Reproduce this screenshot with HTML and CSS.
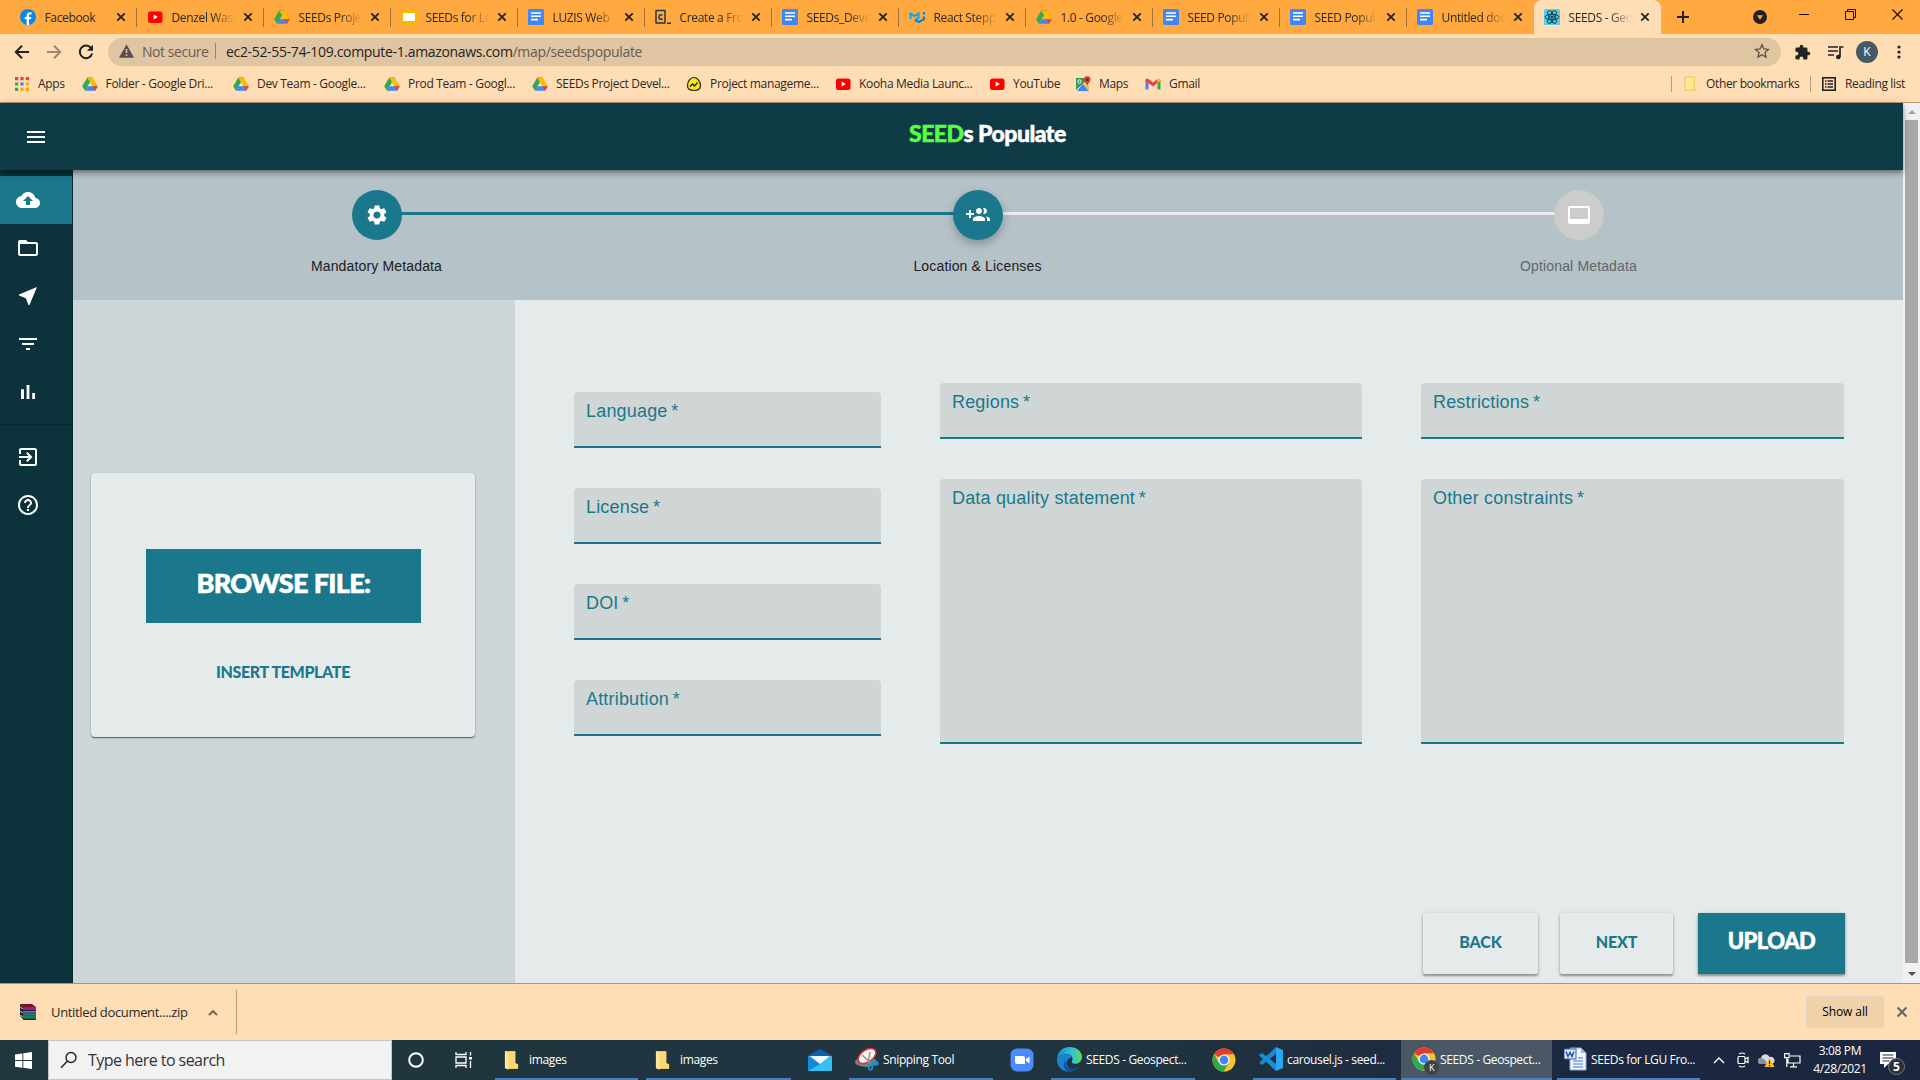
FILE: index.html
```html
<!DOCTYPE html>
<html lang="en">
<head>
<meta charset="utf-8">
<title>SEEDS - Geospatial</title>
<link rel="stylesheet" href="styles.css">
</head>
<body>
<svg class="defs" aria-hidden="true">
  <symbol id="x" viewBox="0 0 10 10"><path d="M1.3 1.3l7.4 7.4M8.700 1.300l-7.400 7.400" stroke="currentColor" stroke-width="1.800" fill="none"/></symbol>
  <symbol id="drive" viewBox="0 0 16 16"><path d="M5.300 1.500h5.400L8 6.200z" fill="#188038"/><path d="M5.300 1.500L.2 10.300l2.700 4.500L8 6.200z" fill="#34a853"/><path d="M10.700 1.500L15.800 10.300h-5.400L5.300 1.500z" fill="#fbbc04"/><path d="M5.500 10.300h10.300l-2.700 4.500H2.900z" fill="#4285f4"/><path d="M10.400 10.300h5.400l-2.700 4.500z" fill="#ea4335"/></symbol>
  <symbol id="docs" viewBox="0 0 16 16"><rect width="16" height="16" rx="1.500" fill="#4285f4"/><path d="M3 4h10M3 7.300h10M3 10.600h7" stroke="#fff" stroke-width="1.600"/></symbol>
  <symbol id="yt" viewBox="0 0 16 16"><rect x="1" y="2.500" width="14.500" height="11.500" rx="2.500" fill="#f00"/><path d="M6.700 5.600v5l4.200-2.500z" fill="#fff"/></symbol>
  <symbol id="folder" viewBox="0 0 16 22"><path d="M1 2h11v13l3 1v5H3l-2-1z" fill="#f2c75c"/><path d="M1 2l4 2v18l-4-2z" fill="#ffe69a"/><path d="M5 3h7v12l3 1v4H5z" fill="#fbd873"/></symbol>
  <symbol id="chrome" viewBox="0 0 24 24"><circle cx="12" cy="12" r="11.500" fill="#fbc02d"/><path d="M12 12L2 6.300A11.500 11.500 0 0 1 22 6.300H12z" fill="#e33b2e"/><path d="M2 6.300A11.500 11.500 0 0 0 11.500 23.500L17 14.800 12 12 7 14.800z" fill="#2da94f"/><circle cx="12" cy="12" r="5.600" fill="#fff"/><circle cx="12" cy="12" r="4.400" fill="#4285f4"/></symbol>
</svg>

<header class="tabs">
  <div class="tab"><svg class="fav" viewBox="0 0 16 16"><circle cx="8" cy="8" r="8" fill="#0b86f5"/><path d="M9 16v-5.700h2l.4-2.300H9V6.600c0-.8.4-1.200 1.300-1.200h1.200V3.300C9 2.800 6.700 3.300 6.700 6.200V8h-2v2.300h2V16z" fill="#fff"/></svg><span class="tab-name">Facebook</span><svg class="close"><use href="#x"/></svg></div>
  <div class="tab"><svg class="fav"><use href="#yt"/></svg><span class="tab-name">Denzel Wash</span><svg class="close"><use href="#x"/></svg></div>
  <div class="tab"><svg class="fav"><use href="#drive"/></svg><span class="tab-name">SEEDs Projec</span><svg class="close"><use href="#x"/></svg></div>
  <div class="tab"><svg class="fav" viewBox="0 0 16 16"><rect width="16" height="16" rx="1" fill="#f6b704"/><path d="M2 4h12v8H2z" fill="#fff"/></svg><span class="tab-name">SEEDs for LG</span><svg class="close"><use href="#x"/></svg></div>
  <div class="tab"><svg class="fav"><use href="#docs"/></svg><span class="tab-name">LUZIS Web -</span><svg class="close"><use href="#x"/></svg></div>
  <div class="tab"><svg class="fav" viewBox="0 0 16 16" fill="none" stroke="#263645" stroke-width="1.500"><rect x="1" y="1.500" width="9" height="12.500" rx=".5"/><path d="M7.500 6.300Q4 4.800 4 8t3.500 1.700M12 14.200h4"/></svg><span class="tab-name">Create a Fro</span><svg class="close"><use href="#x"/></svg></div>
  <div class="tab"><svg class="fav"><use href="#docs"/></svg><span class="tab-name">SEEDs_Deve</span><svg class="close"><use href="#x"/></svg></div>
  <div class="tab"><svg class="fav" viewBox="0 0 16 16" fill="none" stroke-width="2"><path d="M1.500 10V4.500L5.500 7l4-2.500V9L6 11" stroke="#00a5f5"/><path d="M6 11l4 2 5-3V7.500M15 3v2.500" stroke="#0082c8"/></svg><span class="tab-name">React Stepp</span><svg class="close"><use href="#x"/></svg></div>
  <div class="tab"><svg class="fav"><use href="#drive"/></svg><span class="tab-name">1.0 - Google</span><svg class="close"><use href="#x"/></svg></div>
  <div class="tab"><svg class="fav"><use href="#docs"/></svg><span class="tab-name">SEED Popula</span><svg class="close"><use href="#x"/></svg></div>
  <div class="tab"><svg class="fav"><use href="#docs"/></svg><span class="tab-name">SEED Popula</span><svg class="close"><use href="#x"/></svg></div>
  <div class="tab last"><svg class="fav"><use href="#docs"/></svg><span class="tab-name">Untitled doc</span><svg class="close"><use href="#x"/></svg></div>
  <div class="tab active"><svg class="fav" viewBox="0 0 16 16"><rect width="16" height="16" rx="1.500" fill="#53cdec"/><g fill="none" stroke="#174150" stroke-width="1"><ellipse cx="8" cy="8" rx="7" ry="2.700"/><ellipse cx="8" cy="8" rx="7" ry="2.700" transform="rotate(60 8 8)"/><ellipse cx="8" cy="8" rx="7" ry="2.700" transform="rotate(120 8 8)"/></g><circle cx="8" cy="8" r="1.500" fill="#174150"/></svg><span class="tab-name">SEEDS - Geo</span><svg class="close"><use href="#x"/></svg></div>
  <svg class="plus" viewBox="0 0 14 14"><path d="M7 1v12M1 7h12" stroke="#222" stroke-width="2"/></svg>
  <div class="win">
    <svg class="menu" width="14" height="14" viewBox="0 0 14 14"><circle cx="7" cy="7" r="7" fill="#222"/><path d="M4 5.200h6L7 9.800z" fill="#ffa940"/></svg>
    <svg width="10" height="10" viewBox="0 0 10 10" class="up"><path d="M0 5.500h10" stroke="#111"/></svg>
    <svg width="11" height="11" viewBox="0 0 11 11" class="up" fill="none" stroke="#111"><path d="M.5 2.500h8v8h-8zM2.500 2.500v-2h8v8h-2"/></svg>
    <svg width="11" height="11" viewBox="0 0 11 11" class="up"><path d="M.5.500l10 10M10.500.500l-10 10" stroke="#111" stroke-width="1.100"/></svg>
  </div>
</header>

<div class="toolbar">
  <svg class="nav" viewBox="0 0 16 16"><path d="M15 8H2M8 1.800L1.800 8 8 14.200" fill="none" stroke="#222" stroke-width="2"/></svg>
  <svg class="nav" viewBox="0 0 16 16"><path d="M1 8h13M8 1.800L14.200 8 8 14.200" fill="none" stroke="#9c8a73" stroke-width="2"/></svg>
  <svg class="nav" viewBox="0 0 16 16"><path d="M13.300 4.200A6.300 6.300 0 1 0 14.200 9.500" fill="none" stroke="#222" stroke-width="2"/><path d="M15 .8v6H9z" fill="#222"/></svg>
  <div class="omni">
    <svg width="15" height="14" viewBox="0 0 15 14"><path d="M7.500.300L15 13.700H0z" fill="#52504d"/><path d="M7.500 5v4M7.500 10.300v1.700" stroke="#dfc5a1" stroke-width="1.500"/></svg>
    <span class="insecure">Not secure</span><i class="bar"></i>
    <span class="url"><b>ec2-52-55-74-109.compute-1.amazonaws.com</b>/map/seedspopulate</span>
    <svg class="star" viewBox="0 0 16 16"><path d="M8 1.700l1.900 4.300 4.600.4-3.500 3.100 1 4.600L8 11.700l-4 2.400 1-4.600L1.500 6.400 6.100 6z" fill="none" stroke="#5a5148" stroke-width="1.300"/></svg>
  </div>
  <div class="tools">
    <svg width="17" height="17" viewBox="0 0 24 24"><path fill="#222" d="M20.500 11H19V7c0-1.100-.9-2-2-2h-4V3.500a2.500 2.500 0 0 0-5 0V5H4c-1.100 0-2 .9-2 2v3.800h1.500a2.700 2.700 0 0 1 0 5.400H2V20c0 1.100.9 2 2 2h3.800v-1.500a2.700 2.700 0 0 1 5.400 0V22H17c1.100 0 2-.9 2-2v-4h1.500a2.500 2.500 0 0 0 0-5z"/></svg>
    <svg width="17" height="15" viewBox="0 0 17 15"><path d="M1 2h10M1 6h10M1 10h6" stroke="#222" stroke-width="1.700"/><path d="M13 12V2h3.500" stroke="#222" stroke-width="1.700" fill="none"/><circle cx="11.300" cy="12" r="2.300" fill="#222"/></svg>
    <span class="avatar">K</span>
    <svg class="dots" width="4" height="14" viewBox="0 0 4 14" fill="#222"><circle cx="2" cy="2" r="1.600"/><circle cx="2" cy="7" r="1.600"/><circle cx="2" cy="12" r="1.600"/></svg>
  </div>
</div>

<nav class="bookmarks">
  <a><svg viewBox="0 0 16 16"><path d="M1 1h3.200v3.200H1zM6.400 1h3.200v3.200H6.400zM11.800 1H15v3.200h-3.200z" fill="#ea4335"/><path d="M1 6.400h3.200v3.200H1zM1 11.800h3.200V15H1z" fill="#34a853"/><path d="M6.400 6.400h3.200v3.200H6.400z" fill="#4285f4"/><path d="M11.800 6.400H15v3.200h-3.200zM6.400 11.800h3.200V15H6.400zM11.800 11.800H15V15h-3.200z" fill="#fbaa05"/></svg>Apps</a>
  <a><svg><use href="#drive"/></svg>Folder - Google Dri...</a>
  <a><svg><use href="#drive"/></svg>Dev Team - Google...</a>
  <a><svg><use href="#drive"/></svg>Prod Team - Googl...</a>
  <a><svg><use href="#drive"/></svg>SEEDs Project Devel...</a>
  <a><svg viewBox="0 0 16 16"><path d="M8 1.500C4 1.500 1.500 6 1.500 9.500c0 3 2.500 5 6.500 5s6.500-2 6.500-5S12 1.500 8 1.500z" fill="#ffe81a" stroke="#222" stroke-width="1.200"/><path d="M4 10.500L6.500 8l2 2L11.500 6.500" fill="none" stroke="#222" stroke-width="1.400"/></svg>Project manageme...</a>
  <a><svg><use href="#yt"/></svg>Kooha Media Launc...</a>
  <a><svg><use href="#yt"/></svg>YouTube</a>
  <a><svg viewBox="0 0 16 16"><path d="M1 2h13v13H1z" fill="#dfe3e6"/><path d="M1 2h9v4L1 14z" fill="#2f9e56"/><path d="M8 8l6 7H2z" fill="#4285f4"/><path d="M8 8l6 7V9z" fill="#fbc02d"/><path d="M12.200 9.500C11 7 9 5.800 9 3.500a3.200 3.200 0 0 1 6.500 0c0 2.300-2 3.500-3.300 6z" fill="#e0392b"/><circle cx="12.200" cy="3.700" r="1.200" fill="#7c1a13"/><circle cx="4.500" cy="5.500" r="1.700" fill="none" stroke="#fff"/></svg>Maps</a>
  <a><svg viewBox="0 0 16 16"><path d="M.5 4v9.500h3V6z" fill="#4285f4"/><path d="M15.500 4v9.500h-3V6z" fill="#34a853"/><path d="M.5 4.500Q.8 1.500 3.500 3L8 6.500 12.500 3v4L8 10.500 .5 5z" fill="#ea4335"/><path d="M12.500 3q2.700-1.500 3 1.500V5l-3 2z" fill="#fbbc04"/></svg>Gmail</a>
  <div class="bm-right"><i class="bar"></i><svg class="bf" viewBox="0 0 12 16"><path d="M.6 1h10v10.500l1 1V15H.6z" fill="#ffe893" stroke="#e8c746"/></svg>Other bookmarks<i class="bar b2"></i><svg class="rl" viewBox="0 0 14 14"><rect x=".8" y=".8" width="12.400" height="12.400" fill="none" stroke="#222" stroke-width="1.600"/><path d="M3 4h1.500M5.500 4H11M3 7h1.500M5.500 7H11M3 10h1.500M5.500 10H11" stroke="#222" stroke-width="1.400"/></svg>Reading list</div>
</nav>

<div class="view">
  <div class="app">
    <header class="appbar">
      <svg class="mi" viewBox="0 0 24 24"><path d="M3 18h18v-2H3v2zm0-5h18v-2H3v2zm0-7v2h18V6H3z"/></svg>
      <h1><span>SEED</span>s Populate</h1>
    </header>
    <div class="body">
      <aside class="side">
        <a class="on"><svg class="mi" viewBox="0 0 24 24"><path d="M19.350 10.040C18.670 6.590 15.640 4 12 4 9.110 4 6.600 5.640 5.350 8.040 2.340 8.360 0 10.910 0 14c0 3.310 2.690 6 6 6h13c2.760 0 5-2.240 5-5 0-2.640-2.050-4.780-4.650-4.960zM14 13v4h-4v-4H7l5-5 5 5h-3z"/></svg></a>
        <a><svg class="mi" viewBox="0 0 24 24"><path d="M20 6h-8l-2-2H4c-1.100 0-1.990.9-1.990 2L2 18c0 1.100.9 2 2 2h16c1.100 0 2-.9 2-2V8c0-1.100-.9-2-2-2zm0 12H4V8h16v10z"/></svg></a>
        <a><svg class="mi" viewBox="0 0 24 24"><path d="M21 3L3 10.530v.98l6.840 2.650L12.480 21h.98L21 3z"/></svg></a>
        <a><svg class="mi" viewBox="0 0 24 24"><path d="M10 18h4v-2h-4v2zM3 6v2h18V6H3zm3 7h12v-2H6v2z"/></svg></a>
        <a><svg class="mi" viewBox="0 0 24 24"><path d="M5 9.200h3V19H5zM10.600 5h2.800v14h-2.800zm5.600 8H19v6h-2.800z"/></svg></a>
        <hr>
        <a><svg class="mi" viewBox="0 0 24 24"><path d="M10.090 15.590L11.500 17l5-5-5-5-1.410 1.410L12.670 11H3v2h9.670l-2.580 2.590zM19 3H5c-1.110 0-2 .9-2 2v4h2V5h14v14H5v-4H3v4c0 1.100.89 2 2 2h14c1.100 0 2-.9 2-2V5c0-1.100-.9-2-2-2z"/></svg></a>
        <a><svg class="mi" viewBox="0 0 24 24"><path d="M11 18h2v-2h-2v2zm1-16C6.480 2 2 6.480 2 12s4.480 10 10 10 10-4.480 10-10S17.520 2 12 2zm0 18c-4.410 0-8-3.590-8-8s3.590-8 8-8 8 3.590 8 8-3.590 8-8 8zm0-14c-2.210 0-4 1.790-4 4h2c0-1.100.9-2 2-2s2 .9 2 2c0 2-3 1.750-3 5h2c0-2.250 3-2.500 3-5 0-2.210-1.790-4-4-4z"/></svg></a>
      </aside>
      <main class="main">
        <section class="steps">
          <i class="rail"></i>
          <div class="step"><span class="dot"><svg class="mi" viewBox="0 0 24 24"><path d="M19.140 12.940c.04-.3.060-.61.060-.94 0-.32-.02-.64-.07-.94l2.030-1.580c.18-.14.230-.41.120-.61l-1.920-3.320c-.12-.22-.37-.29-.59-.22l-2.390.96c-.5-.38-1.030-.7-1.620-.94l-.36-2.540c-.04-.24-.24-.41-.48-.41h-3.840c-.24 0-.43.17-.47.41l-.36 2.540c-.59.240-1.130.57-1.620.94l-2.390-.96c-.22-.08-.47 0-.59.22L2.740 8.870c-.12.210-.08.470.12.610l2.030 1.580c-.05.300-.09.630-.09.94s.02.640.070.94l-2.030 1.580c-.18.140-.23.410-.12.610l1.920 3.320c.12.220.37.290.59.220l2.390-.96c.5.380 1.030.7 1.620.94l.36 2.540c.05.240.24.410.48.410h3.840c.24 0 .44-.17.470-.41l.36-2.540c.59-.24 1.130-.56 1.620-.94l2.390.96c.22.080.47 0 .59-.22l1.920-3.320c.12-.22.070-.47-.12-.61l-2.010-1.580zM12 15.600c-1.980 0-3.600-1.620-3.600-3.600s1.620-3.600 3.600-3.600 3.600 1.620 3.600 3.600-1.620 3.600-3.600 3.600z"/></svg></span>Mandatory Metadata</div>
          <div class="step"><span class="dot lift"><svg class="mi" viewBox="0 0 24 24"><path d="M8 10H5V7H3v3H0v2h3v3h2v-3h3v-2zm10 1c1.660 0 2.990-1.340 2.990-3S19.660 5 18 5c-.32 0-.63.050-.91.140.57.810.9 1.790.9 2.860s-.34 2.040-.9 2.860c.28.090.59.140.91.140zm-5 0c1.660 0 2.990-1.340 2.990-3S14.660 5 13 5c-1.660 0-3 1.340-3 3s1.340 3 3 3zm6.620 2.160c.83.730 1.380 1.660 1.380 2.840v2h3v-2c0-1.540-2.370-2.490-4.380-2.840zM13 13c-2 0-6 1-6 3v2h12v-2c0-2-4-3-6-3z"/></svg></span>Location &amp; Licenses</div>
          <div class="step off"><span class="dot"><svg class="mi" viewBox="0 0 24 24"><path d="M21 3H3c-1.100 0-2 .9-2 2v14c0 1.100.9 2 2 2h18c1.100 0 1.990-.9 1.990-2L23 5c0-1.100-.9-2-2-2zm0 13H3V5h18v11z"/></svg></span>Optional Metadata</div>
        </section>
        <div class="work">
          <section class="panel"><div class="card"><button class="browse">BROWSE FILE:</button><button class="template">INSERT TEMPLATE</button></div></section>
          <form class="form">
            <div class="cols">
              <div class="col first"><label>Language&thinsp;*</label><label>License&thinsp;*</label><label>DOI&thinsp;*</label><label>Attribution&thinsp;*</label></div>
              <div class="col"><label>Regions&thinsp;*</label><label class="area">Data quality statement&thinsp;*</label></div>
              <div class="col"><label>Restrictions&thinsp;*</label><label class="area">Other constraints&thinsp;*</label></div>
            </div>
            <div class="actions"><button type="button" class="back">BACK</button><button type="button" class="next">NEXT</button><button type="button" class="upload">UPLOAD</button></div>
          </form>
        </div>
      </main>
    </div>
  </div>
  <div class="scroll"><svg viewBox="0 0 8 4"><path d="M0 4l4-4 4 4z" fill="#a3a3a3"/></svg><i></i><svg viewBox="0 0 8 4"><path d="M0 0h8L4 4z" fill="#505050"/></svg></div>
</div>

<footer class="downloads">
  <svg width="17" height="17" viewBox="0 0 17 17"><path d="M1 1h12l4 3H4z" fill="#7a1030"/><path d="M4 4h13v3H4z" fill="#b0157a"/><path d="M4 8.500h13v3H4z" fill="#1663b5"/><path d="M4 13h13v3H4z" fill="#14804a"/><path d="M1 1l3 3v12l-3-3z" fill="#222"/><path d="M1.500 4l2 2M1.500 8l2 2M1.500 12l2 2" stroke="#fff"/><path d="M4 7.700h13M4 12.200h13M4 16.400h13" stroke="#222" stroke-width="1.300"/></svg>
  <span class="zip">Untitled document....zip</span>
  <svg class="chev" viewBox="0 0 10 7"><path d="M1 6l4-4 4 4" fill="none" stroke="#6b6258" stroke-width="1.900"/></svg>
  <i class="bar"></i>
  <button class="showall">Show all</button>
  <svg class="dx"><use href="#x"/></svg>
</footer>

<footer class="taskbar">
  <div class="start"><svg width="17" height="17" viewBox="0 0 17 17" fill="#fff"><path d="M0 2.400l7.400-1v6.700H0zM8.300 1.200L17 0v8.100H8.300zM0 9h7.400v6.700l-7.400-1zM8.300 9H17v8l-8.700-1.200z"/></svg></div>
  <div class="search"><svg width="18" height="18" viewBox="0 0 18 18" fill="none" stroke="#222" stroke-width="1.400"><circle cx="11" cy="6.500" r="5"/><path d="M7.500 10L1 16.800"/></svg>Type here to search</div>
  <div class="sys w48"><svg width="18" height="18" viewBox="0 0 18 18"><circle cx="9" cy="9" r="6.800" fill="none" stroke="#fff" stroke-width="2"/></svg></div>
  <div class="sys w46"><svg width="17" height="16" viewBox="0 0 17 16" fill="none" stroke="#fff" stroke-width="1.300"><path d="M1 0v2.500h10V0M1 5h10v6H1zM1 16v-2.500h10V16M15.500 0v3.500M15.500 9v7"/><path d="M14 5h3v2.500h-3z" fill="#fff" stroke="none"/></svg></div>
  <div class="task t1"><svg class="fold"><use href="#folder"/></svg>images</div>
  <div class="task t2"><svg class="fold"><use href="#folder"/></svg>images</div>
  <div class="sys mail"><svg width="24" height="24" viewBox="0 0 24 24"><path d="M0 8l12-7 12 7z" fill="#0b62b3"/><path d="M0 8h24v15H0z" fill="#29aaea"/><path d="M0 23L24 8v15z" fill="#35c0f2"/><path d="M0 8l12 8-12 7z" fill="#1688d8"/><path d="M2 8h20l-10 8z" fill="#f3f7fa"/></svg></div>
  <div class="task t3"><svg width="24" height="24" viewBox="0 0 24 24"><ellipse cx="11" cy="15" rx="11" ry="5" fill="#777e84"/><ellipse cx="12" cy="9" rx="10" ry="6" transform="rotate(-35 12 9)" fill="#f5f5f5" stroke="#d83434" stroke-width="1.500"/><path d="M7 8l10 9M15 5l-2 11" stroke="#8d9499" stroke-width="1.500"/><g fill="none" stroke="#1c8fd0" stroke-width="1.700"><ellipse cx="20" cy="16" rx="3" ry="1.700" transform="rotate(20 20 16)"/><ellipse cx="15.500" cy="20" rx="1.800" ry="3"/></g></svg>Snipping Tool</div>
  <div class="sys zoom"><svg width="24" height="24" viewBox="0 0 24 24"><rect x=".5" y=".5" width="23" height="23" rx="6.500" fill="#4a8cff"/><path d="M5 8h8q2 0 2 2v6H7q-2 0-2-2zM16 11l3.500-2.500v7L16 13z" fill="#fff"/></svg></div>
  <div class="task t4"><svg width="25" height="25" viewBox="0 0 24 24"><defs><linearGradient id="edge"><stop stop-color="#1689d2"/><stop offset=".6" stop-color="#2fc3d5"/><stop offset="1" stop-color="#62d957"/></linearGradient></defs><path d="M0 12C0 5 5 0 12 0c7 0 12 4.500 12 9.500 0 4-3 6.500-6.500 6.500-3 0-4-1-3-2.500 1.500-4-1.500-6.500-5-6.500C5 7 1 9 0 12z" fill="url(#edge)"/><path d="M0 12c1-3 5-5 9.500-5 3 0 4.500 1.500 4.500 3-6 1-7 9.500 1.500 12.500C7 26 0 20 0 12z" fill="#1a83d1"/><path d="M9 12c-3 6 3 13 12.500 6.500C18 23 13.500 24.500 10 23.300 5 20 6 15 9 12z" fill="#0c4f9c"/></svg>SEEDS - Geospect...</div>
  <div class="sys chr"><svg width="24" height="24"><use href="#chrome"/></svg></div>
  <div class="task t5"><svg width="24" height="24" viewBox="0 0 24 24"><path d="M17 0l7 3v18l-7 3z" fill="#29a6f2"/><path d="M17 0v7L3 18l-3-2.300z" fill="#1687d0"/><path d="M17 24v-7L3 6 0 8.300z" fill="#168fdb"/></svg>carousel.js - seed...</div>
  <div class="task t6"><span class="badged"><svg width="24" height="24"><use href="#chrome"/></svg><b>K</b></span>SEEDS - Geospect...</div>
  <div class="task t7"><svg width="23" height="24" viewBox="0 0 23 24"><path d="M6 1h11l5 5v17H6z" fill="#f1f6fe" stroke="#8fb0de"/><path d="M17 1v5h5z" fill="#9bb9e6"/><path d="M9 14h10M9 17h10M9 20h10M14 11h5" stroke="#7aa0da" stroke-width="1.400"/><rect y="2" width="12" height="10" fill="#dfeaff" stroke="#355fa8"/><path d="M2 4.500l2 5 2-4 2 4 2-5" fill="none" stroke="#2350a0" stroke-width="1.500"/></svg>SEEDs for LGU Fro...</div>
  <div class="tray">
    <svg width="12" height="8" viewBox="0 0 12 8"><path d="M1 7l5-5 5 5" fill="none" stroke="#fff" stroke-width="1.400"/></svg>
    <svg class="meet" width="12" height="16" viewBox="0 0 12 16" fill="none" stroke="#fff" stroke-width="1.200"><rect x="1" y="4.500" width="7" height="7" rx="1"/><path d="M8 7l3-1.500v5L8 9M2 2q3-2 6 0M2 14q3 2 6 0"/></svg>
    <svg width="17" height="15" viewBox="0 0 17 15"><path d="M3 11a3 3 0 0 1 0-6 4.500 4.500 0 0 1 8.500-1A3.500 3.500 0 0 1 14 11z" fill="#d9dcdf"/><path d="M3 11a3 3 0 0 1 0-6q4 0 6 6z" fill="#8a9198"/><path d="M11.500 4.500L16.500 14h-10z" fill="#ffc31f"/><path d="M11.500 7.500v3.500M11.500 12v1.200" stroke="#222" stroke-width="1.200"/></svg>
    <svg width="17" height="15" viewBox="0 0 17 15" fill="none" stroke="#fff" stroke-width="1.200"><path d="M6 3h10v7H4V6M9.500 10v3.500M6 13.800h7M.6.700h4.500v4H.6zM2.800 5v9"/></svg>
    <div class="clock"><span>3:08 PM</span><span>4/28/2021</span></div>
    <span class="note"><svg width="16" height="17" viewBox="0 0 16 17"><path d="M0 0h16v12H8l-4 4v-4H0z" fill="#fff"/><path d="M2.500 3h11M2.500 6h11M2.500 9h7" stroke="#1c2940" stroke-width="1.200"/></svg><b>5</b></span>
  </div>
</footer>
</body>
</html>
```
FILE: styles.css
```css
* { box-sizing: border-box; }
body {
  margin: 0; width: 1920px; height: 1080px; overflow: hidden;
  display: flex; flex-direction: column;
  font-family: "Open Sans", "Noto Sans", sans-serif; font-size: 12px; color: #2b2824;
  white-space: nowrap;
}
svg { flex: none; display: block; }
button { border: 0; padding: 0; font: inherit; }
.defs { position: absolute; width: 0; height: 0; }
.bar { width: 1px; flex: none; background: #b59d80; }

/* tab strip */
.tabs { height: 34px; flex: none; display: flex; align-items: center; background: #ffa940; padding-left: 9.500px; }
.tab { width: 127px; height: 34px; flex: none; display: flex; align-items: center; padding-left: 10px; position: relative; letter-spacing: -.35px; }
.tab::after { content: ""; position: absolute; right: 0; top: 8px; width: 1px; height: 19px; background: #a3702f; }
.tab.last::after, .tab.active::after { display: none; }
.tab.active { background: #ffdeb6; border-radius: 8px 8px 0 0; }
.fav { width: 16px; height: 16px; margin-right: 9px; }
.tab-name { width: 63px; overflow: hidden; -webkit-mask-image: linear-gradient(90deg, #000 65%, transparent); mask-image: linear-gradient(90deg, #000 65%, transparent); }
.tab:first-child .tab-name { -webkit-mask-image: none; mask-image: none; }
.close { width: 10px; height: 10px; margin-left: 8px; color: #222; }
.plus { width: 14px; height: 14px; margin-left: 15px; }
.win { margin-left: auto; display: flex; align-items: center; gap: 36px; padding-right: 17px; }
.win .menu { margin-right: -4px; }
.win .up { position: relative; top: -3px; }

/* address row */
.toolbar { height: 32px; flex: none; display: flex; align-items: center; background: #ffdeb6; padding: 4px 13px 0 14px; }
.nav { width: 16px; height: 16px; margin-right: 16px; }
.omni { width: 1673px; height: 28px; margin-left: -2px; border-radius: 14px; background: #dfc5a1; display: flex; align-items: center; padding: 0 11px 2px; font-size: 14px; }
.insecure { width: 73px; margin-left: 8px; color: #6a6055; letter-spacing: -.45px; }
.omni .bar { height: 16px; margin-right: 10px; background: #9b866b; }
.url { color: #665c50; letter-spacing: -.33px; }
.url b { font-weight: 400; color: #26231f; }
.star { width: 16px; height: 16px; margin-left: auto; }
.tools { flex: 1; display: flex; justify-content: space-between; align-items: center; padding-left: 13px; padding-right: 6px; }
.avatar { width: 22px; height: 22px; margin: 0 3px 0 -4px; border-radius: 50%; background: #455a64; color: #fff; text-align: center; line-height: 22px; }

/* bookmarks */
.bookmarks { height: 37px; flex: none; background: #ffdeb6; border-bottom: 1px solid #ae9678; display: grid; grid-template-columns: 67.500px 151.500px 151px 148px 154px 149px 154px 86px 70px 70px 1fr; align-items: center; padding: 0 15px 1px 14px; letter-spacing: -.31px; }
.bookmarks a { display: flex; align-items: center; gap: 8px; }
.bookmarks a svg { width: 16px; height: 16px; }
.bm-right { justify-self: end; display: flex; align-items: center; width: 234px; letter-spacing: -.35px; }
.bookmarks .bar { height: 16px; }
.bf { width: 12px; height: 15px; margin: 0 10px 0 12px; }
.rl { width: 14px; height: 14px; margin: 0 9px 0 11px; }
.b2 { margin-left: auto; }

/* web application */
.view { height: 880px; flex: none; display: flex; }
.app { width: 1903px; display: flex; flex-direction: column; }
.appbar { height: 67px; flex: none; background: #0f3b47; display: flex; align-items: center; padding-left: 24px; z-index: 1; box-shadow: 0 2px 4px -1px rgba(0,0,0,.3), 0 4px 5px rgba(0,0,0,.18), 0 1px 10px rgba(0,0,0,.14); }
.mi { width: 24px; height: 24px; fill: #fff; }
h1 { margin: 0; flex: 1; padding: 0 0 7px 861px; font: 900 23px/30px Lato, sans-serif; color: #fff; letter-spacing: -.5px; -webkit-text-stroke: .5px; }
h1 span { color: #58ff40; }
.body { flex: 1; display: flex; min-height: 0; }
.side { width: 73px; background: #0c323b; border-right: 1px solid #0a2a32; padding-top: 6px; }
.side a { height: 48px; display: flex; align-items: center; padding-left: 16px; }
.side .on { background: #1b788c; }
.side hr { height: 1px; border: 0; margin: 8px 0; background: #0a2a32; }
.main { flex: 1; display: flex; flex-direction: column; }
.steps { height: 130px; padding: 20px 24px 0 3px; background: #b5c2c7; display: grid; grid-template-columns: repeat(3, 601px); position: relative; }
.rail { position: absolute; left: 303px; top: 42px; width: 1202px; height: 3px; background: linear-gradient(90deg, #1b788c 50%, #ebe8ee 50%); }
.step { display: flex; flex-direction: column; align-items: center; gap: 16px; font: 14px/20px "Liberation Sans", sans-serif; letter-spacing: .15px; color: #1d2022; position: relative; }
.step.off { color: #60676a; }
.dot { width: 50px; height: 50px; border-radius: 50%; background: #1b788c; display: grid; place-items: center; }
.off .dot { background: #ccc; }
.lift { box-shadow: 0 4px 10px rgba(0,0,0,.25); }
.work { flex: 1; display: flex; }
.panel { width: 442px; background: #ced6d9; display: flex; align-items: center; padding: 0 0 73px 18px; }
.card { width: 384px; height: 264px; border-radius: 4px; background: #e5ebea; display: flex; flex-direction: column; align-items: center; padding-top: 76px; box-shadow: 0 1px 1px rgba(0,0,0,.5), 0 1px 3px rgba(0,0,0,.15); font-family: Lato, sans-serif; font-weight: 900; }
.browse { width: 275px; height: 74px; margin-left: 1px; background: #1b788c; color: #fff; font-size: 27px; letter-spacing: -.65px; padding-bottom: 7px; -webkit-text-stroke: .6px; }
.template { background: none; color: #1b788c; font-size: 16px; letter-spacing: -.35px; margin-top: 39px; }
.form { flex: 1; background: #e5ebea; display: flex; flex-direction: column; justify-content: space-between; padding: 83px 58px 9px 59px; }
.cols { display: grid; grid-template-columns: 307px 422px 423px; column-gap: 59px; }
.col { display: flex; flex-direction: column; gap: 40px; }
.first { padding-top: 9px; }
label { height: 56px; border-radius: 4px 4px 0 0; background: #d0d6d5; border-bottom: 2px solid #1b788c; padding: 9px 12px; font: 18px/21px "Liberation Sans", sans-serif; letter-spacing: .18px; color: #1b788c; }
.area { height: 265px; }
.actions { display: flex; justify-content: flex-end; font-family: Lato, sans-serif; font-weight: 900; }
.actions button { height: 61px; color: #1b788c; background: #e5ebea; font-size: 16px; letter-spacing: -.1px; padding-bottom: 5px; border-radius: 2px; box-shadow: 0 2px 2px rgba(0,0,0,.3), 0 1px 4px rgba(0,0,0,.18); }
.actions .back { width: 115px; margin-right: 22px; }
.actions .next { width: 113px; margin-right: 25px; }
.actions .upload { width: 147px; background: #1b788c; color: #fff; font-size: 22px; letter-spacing: -.5px; padding-bottom: 6px; border-radius: 0; -webkit-text-stroke: .5px; }
.scroll { width: 17px; background: #f1f1f1; display: flex; flex-direction: column; align-items: center; padding: 7px 0; }
.scroll i { flex: 1; width: 13px; margin: 6px 0 9px; background: #a8a8a8; }
.scroll svg { width: 8px; height: 4px; }

/* download shelf */
.downloads { height: 57px; flex: none; border-top: 1px solid #ae9678; background: #ffdeb6; display: flex; align-items: center; padding: 0 12px 0 19px; }
.downloads > svg:first-child { position: relative; top: -1px; }
.zip { width: 138px; margin-left: 15px; font-size: 13px; letter-spacing: -.34px; }
.chev { width: 10px; height: 7px; margin: 0 18px 0 19px; }
.downloads .bar { height: 44px; }
.showall { width: 78px; height: 32px; margin-left: auto; border: 1px solid #dcd3c8; border-radius: 3px; background: #f0d2aa; letter-spacing: -.1px; padding-bottom: 2px; }
.dx { width: 12px; height: 12px; margin-left: 12px; color: #666; }

/* taskbar */
.taskbar { height: 40px; flex: none; display: flex; color: #fff; background: linear-gradient(90deg, #20373f, #20353f 55%, #1b2840 85%, #1b2640); letter-spacing: -.36px; }
.taskbar > div { flex: none; display: flex; align-items: center; }
.start { width: 48px; padding-left: 15px; }
.search { width: 344px; background: #f2f2f2; border: 1px solid #c4c4c4; color: #333; font-size: 16px; letter-spacing: -.55px; gap: 10px; padding-left: 11px; }
.sys { justify-content: center; }
.w48 { width: 48px; }
.w46 { width: 46px; }
.task { height: 40px; border-bottom: 2px solid #4b80bd; gap: 4px; padding-left: 6px; }
.fold { width: 15px; height: 21px; margin: 0 6px 0 3px; }
.t1 { width: 143px; margin-left: 9px; }
.t2 { width: 145px; margin-left: 8px; }
.mail { width: 58px; }
.t3 { width: 144px; }
.zoom { width: 58px; }
.t4 { width: 144px; }
.chr { width: 58px; }
.t5 { width: 143px; }
.t6 { width: 151px; margin-left: 5px; padding-left: 11px; background: #4a5866; }
.t7 { width: 143px; margin-left: 5px; padding-left: 7px; }
.badged, .note { position: relative; }
.badged b { position: absolute; right: -3px; bottom: -4px; width: 15px; height: 15px; border-radius: 50%; background: #37474f; font: 9px/15px "Open Sans", sans-serif; text-align: center; }
.taskbar > .tray { width: 215px; margin-left: 13px; gap: 9px; border-right: 1px solid #6b7486; }
.meet { margin-left: 3px; }
.clock { width: 60px; display: flex; flex-direction: column; align-items: center; line-height: 18px; }
.note { margin-left: 1px; }
.note b { position: absolute; left: 8px; top: 6px; width: 17px; height: 17px; border-radius: 50%; border: 1px solid #777; background: #2c3038; font-size: 12px; line-height: 15px; text-align: center; letter-spacing: 0; }
```
